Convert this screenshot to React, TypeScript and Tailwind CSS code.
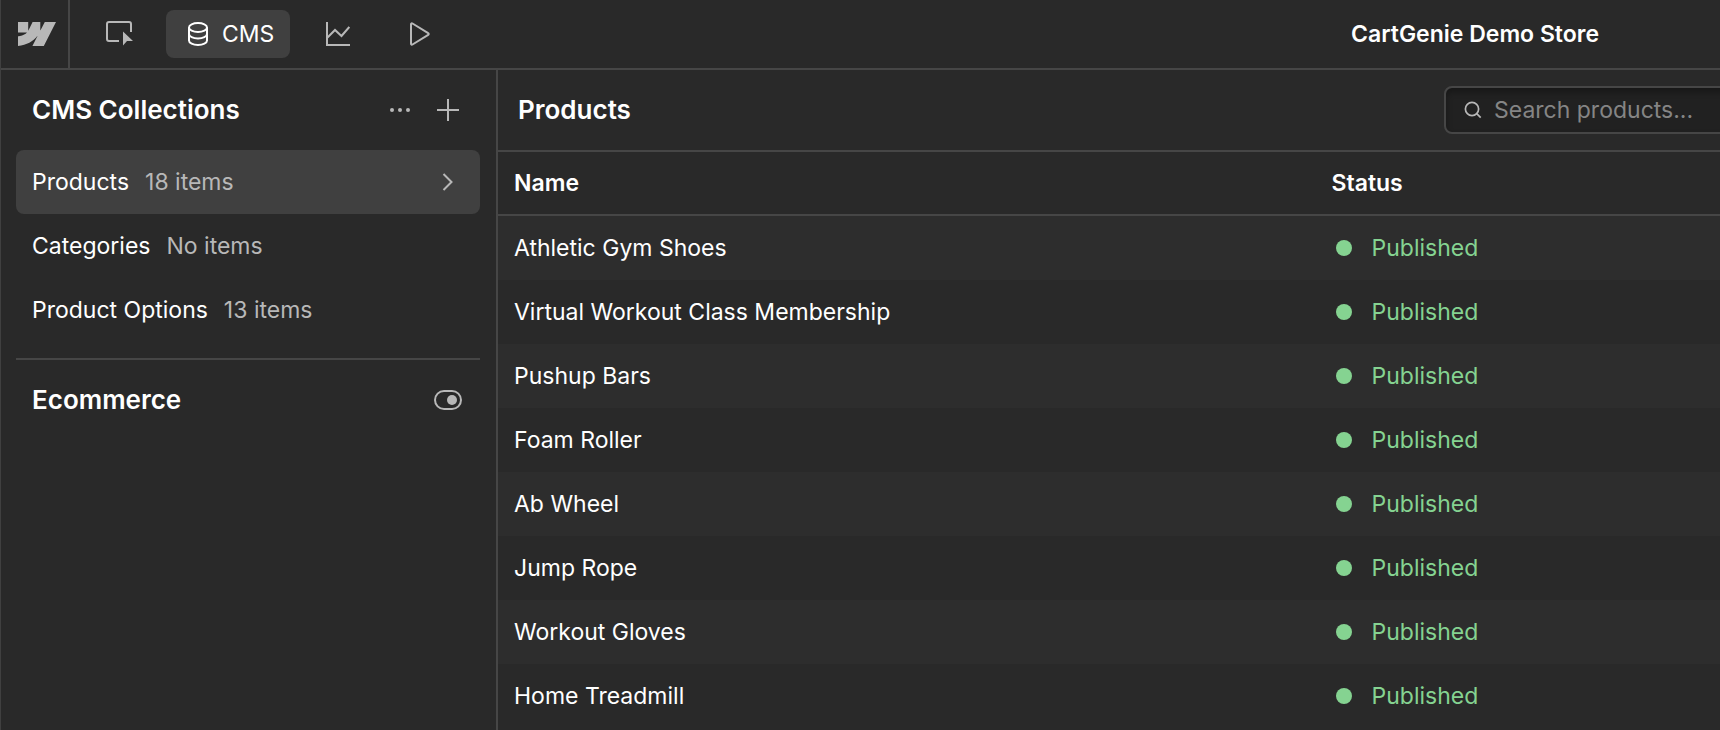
import React from "react";

const collections = [
  { name: "Products", count: "18 items", active: true },
  { name: "Categories", count: "No items", active: false },
  { name: "Product Options", count: "13 items", active: false },
];

const products = [
  "Athletic Gym Shoes",
  "Virtual Workout Class Membership",
  "Pushup Bars",
  "Foam Roller",
  "Ab Wheel",
  "Jump Rope",
  "Workout Gloves",
  "Home Treadmill",
];

function Logo() {
  return (
    <svg width="38" height="24" viewBox="0 0 38 24" fill="currentColor" aria-hidden="true">
      <path d="M38 0 25.8 24H14.4L19.5 14.1H19.3C15.1 19.6 8.8 23.2 0 24V14.2C0 14.2 5.700 13.900 9 10.400H0V0H10.200V8.400L10.400 8.400 14.600 0H22.300V8.300H22.500L26.800 0Z" />
    </svg>
  );
}

function DesignerIcon() {
  return (
    <svg width="28" height="26" viewBox="0 0 28 26" fill="none" aria-hidden="true">
      <path d="M13 20H3a2 2 0 0 1-2-2V3a2 2 0 0 1 2-2h20a2 2 0 0 1 2 2v8" stroke="currentColor" strokeWidth="2" />
      <path d="M17 10.500 27 20H21L17 24.500Z" fill="currentColor" />
    </svg>
  );
}

function DatabaseIcon() {
  return (
    <svg width="20" height="24" viewBox="0 0 20 24" fill="none" stroke="currentColor" strokeWidth="2" aria-hidden="true">
      <ellipse cx="10" cy="5.500" rx="9" ry="4.500" />
      <path d="M1 5.500v13C1 21 5 23 10 23s9-2 9-4.500v-13" />
      <path d="M1 12C1 14.500 5 16.500 10 16.500s9-2 9-4.500" />
    </svg>
  );
}

function ChartIcon() {
  return (
    <svg width="24" height="24" viewBox="0 0 24 24" fill="none" stroke="currentColor" strokeWidth="2" aria-hidden="true">
      <path d="M1 0v23h23" />
      <path d="M1.500 15.500 9 8l6.500 6L23.300 5" />
    </svg>
  );
}

function PlayIcon() {
  return (
    <svg width="20" height="24" viewBox="0 0 20 24" fill="none" stroke="currentColor" strokeWidth="2" strokeLinejoin="round" aria-hidden="true">
      <path d="M1 2.300v19.400c0 .8.800 1.200 1.500.8l15.700-9.700c.7-.4.700-1.200 0-1.600L2.500 1.500C1.800 1.100 1 1.500 1 2.300Z" />
    </svg>
  );
}

export default function App() {
  return (
    <div className="flex min-h-screen flex-col overflow-hidden border-l border-[#404040] bg-[#292929] font-['Inter',sans-serif] text-[23px] leading-8 text-white">
      <header className="flex h-[70px] items-center border-b-2 border-[#464646] text-[#b8b8b8]">
        <a href="#home" aria-label="Dashboard" className="flex w-[69px] items-center self-stretch border-r-2 border-[#464646] pl-[17px]">
          <Logo />
        </a>
        <nav aria-label="Workspace" className="flex items-center">
          <button type="button" aria-label="Designer" className="flex h-12 w-24 items-center justify-center pl-1">
            <DesignerIcon />
          </button>
          <button type="button" className="flex h-12 w-[124px] items-center gap-3.5 rounded-lg bg-[#404040] pl-[22px] text-white">
            <DatabaseIcon />
            CMS
          </button>
          <button type="button" aria-label="Analytics" className="flex h-12 w-24 items-center justify-center">
            <ChartIcon />
          </button>
          <button type="button" aria-label="Preview" className="flex h-12 w-[68px] items-center justify-center">
            <PlayIcon />
          </button>
        </nav>
        <p className="mr-[121px] ml-auto font-semibold text-white">CartGenie Demo Store</p>
      </header>

      <div className="flex flex-1">
        <aside className="w-[497px] shrink-0 border-r-2 border-[#464646] pr-4 pl-[15px]">
          <div className="flex h-20 items-center pr-5 pl-4">
            <h2 className="flex-1 text-[26px] font-semibold">CMS Collections</h2>
            <div className="flex items-center gap-6 text-[#b8b8b8]">
              <button type="button" aria-label="More options">
                <svg width="24" height="24" viewBox="0 0 24 24" fill="currentColor" aria-hidden="true">
                  <circle cx="4" cy="12" r="2" />
                  <circle cx="12" cy="12" r="2" />
                  <circle cx="20" cy="12" r="2" />
                </svg>
              </button>
              <button type="button" aria-label="Add collection">
                <svg width="24" height="24" viewBox="0 0 24 24" fill="none" stroke="currentColor" strokeWidth="2" aria-hidden="true">
                  <path d="M12 1v22M1 12h22" />
                </svg>
              </button>
            </div>
          </div>
          <ul>
            {collections.map((c) => (
              <li key={c.name}>
                <a
                  href="#collection"
                  className={
                    c.active
                      ? "flex h-16 items-center gap-4 rounded-lg bg-[#404040] pr-[26px] pl-4"
                      : "flex h-16 items-center gap-4 pr-[26px] pl-4"
                  }
                >
                  <span>{c.name}</span>
                  <span className="text-[#b8b8b8]">{c.count}</span>
                  {c.active && (
                    <svg className="ml-auto text-[#b8b8b8]" width="12" height="18" viewBox="0 0 12 18" fill="none" stroke="currentColor" strokeWidth="2" aria-hidden="true">
                      <path d="M1.500 1 9.500 9l-8 8" />
                    </svg>
                  )}
                </a>
              </li>
            ))}
          </ul>
          <div className="mt-4 flex h-[82px] items-center border-t-2 border-[#464646] pr-[18px] pl-4">
            <h2 className="flex-1 text-[26px] font-semibold">Ecommerce</h2>
            <button type="button" aria-label="Toggle ecommerce" className="text-[#b8b8b8]">
              <svg width="28" height="20" viewBox="0 0 28 20" fill="none" aria-hidden="true">
                <rect x="1" y="1" width="26" height="18" rx="9" stroke="currentColor" strokeWidth="2" />
                <circle cx="18" cy="10" r="5" fill="currentColor" />
              </svg>
            </button>
          </div>
        </aside>

        <main className="min-w-0 flex-1">
          <div className="flex h-[82px] items-center border-b-2 border-[#464646] pl-5">
            <h1 className="flex-1 text-[26px] font-semibold">Products</h1>
            <label className="-mr-4 flex h-12 w-[292px] shrink-0 items-center gap-3 rounded-lg border-2 border-[#464646] bg-[#212121] pl-[18px] text-[#b8b8b8] shadow-[inset_0_4px_6px_rgba(0,0,0,0.3)]">
              <svg className="shrink-0" width="18" height="18" viewBox="0 0 18 18" fill="none" stroke="currentColor" strokeWidth="1.700" aria-hidden="true">
                <circle cx="8" cy="8" r="6.600" />
                <path d="m12.700 12.700 4 4" />
              </svg>
              <input
                type="text"
                aria-label="Search products"
                placeholder="Search products..."
                className="w-full min-w-0 bg-transparent text-white outline-none placeholder:text-[#858585]"
              />
            </label>
          </div>
          <table className="w-full table-fixed border-separate border-spacing-0 text-left">
            <thead>
              <tr>
                <th scope="col" className="h-16 w-[66.9%] border-b-2 border-[#464646] px-4 py-0 font-semibold">Name</th>
                <th scope="col" className="h-16 border-b-2 border-[#464646] px-4 py-0 font-semibold">Status</th>
              </tr>
            </thead>
            <tbody>
              {products.map((name) => (
                <tr key={name} className="h-16 odd:bg-[#2d2d2d]">
                  <td className="px-4 py-0">{name}</td>
                  <td className="px-5 py-0">
                    <span className="flex items-center gap-5 text-[#85d391]">
                      <span className="size-4 rounded-full bg-[#85d391]" />
                      Published
                    </span>
                  </td>
                </tr>
              ))}
            </tbody>
          </table>
        </main>
      </div>
    </div>
  );
}
